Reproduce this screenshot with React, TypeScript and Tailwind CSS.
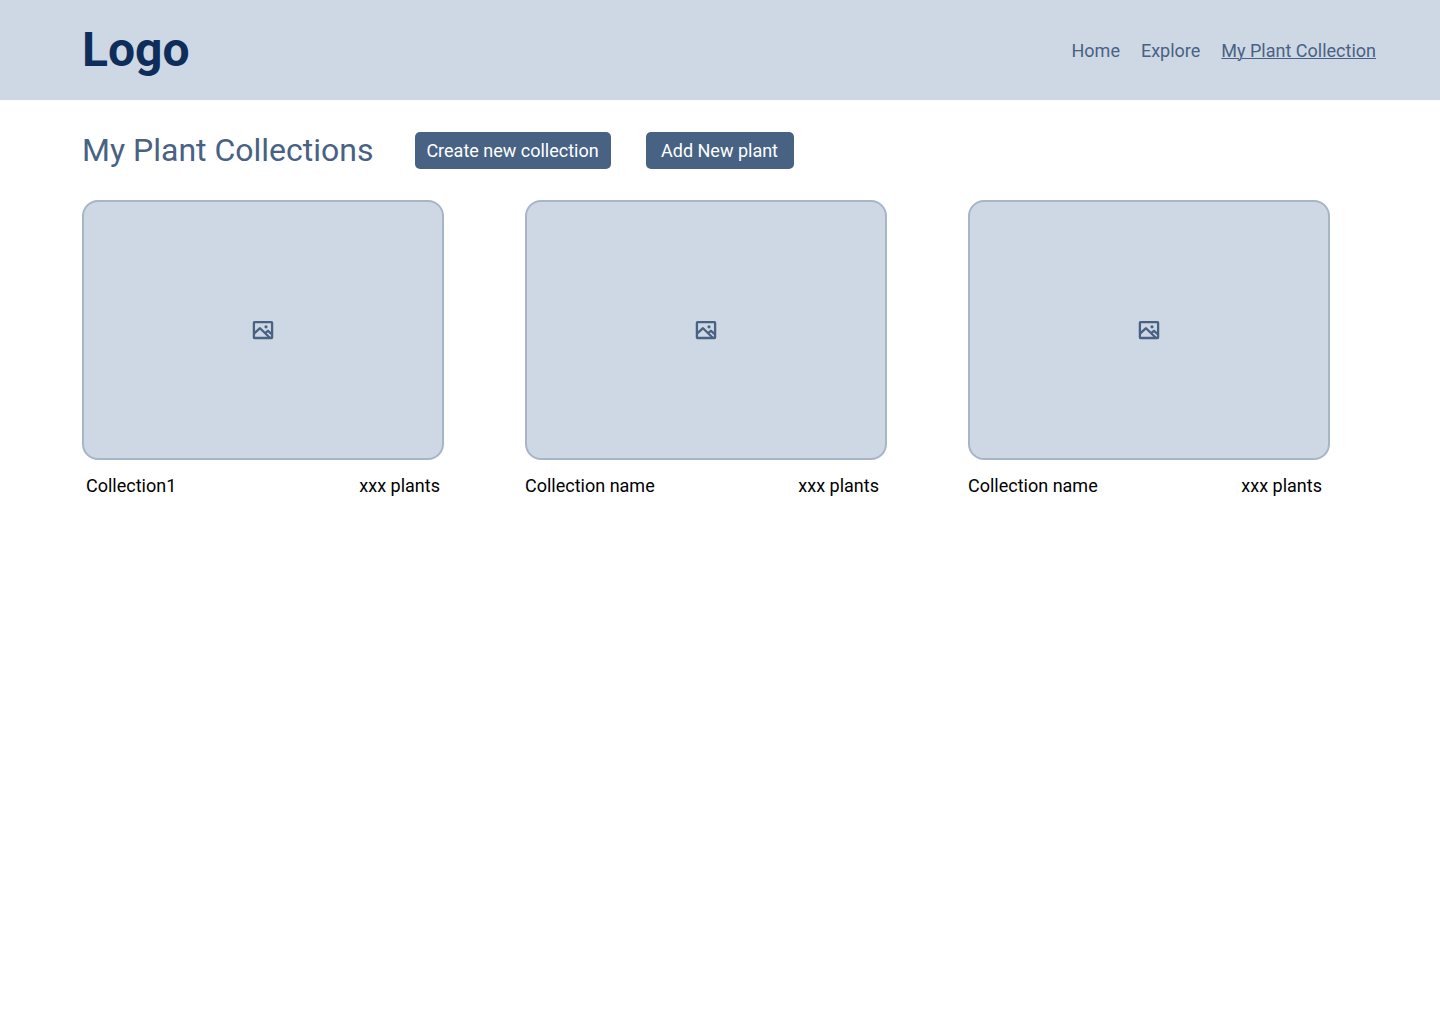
const navLinks = [
  { label: "Home", current: false },
  { label: "Explore", current: false },
  { label: "My Plant Collection", current: true },
];

const collections = [
  { name: "Collection1", count: "xxx plants", inset: "px-1" },
  { name: "Collection name", count: "xxx plants", inset: "pr-2" },
  { name: "Collection name", count: "xxx plants", inset: "pr-2" },
];

function ImageIcon() {
  return (
    <svg
      width="24"
      height="24"
      viewBox="0 0 24 24"
      fill="none"
      stroke="#486284"
      strokeWidth="2.3"
      strokeLinejoin="round"
      aria-hidden="true"
    >
      <rect x="2.9" y="4.2" width="18.2" height="15.8" rx="0.6" />
      <path d="M3 15.6L9 10.2L18.8 19.8M14 15.2L17 12.8L21 16.4" />
      <circle cx="15" cy="8.8" r="1.6" fill="#486284" stroke="none" />
    </svg>
  );
}

export default function App() {
  return (
    <div className="min-h-screen bg-white font-[Roboto,sans-serif] text-lg text-black">
      <header className="flex h-[100px] items-center justify-between bg-[#ced8e4] pr-16 pl-[82px]">
        <a href="#" className="text-5xl font-bold text-[#0f2d5b]">
          Logo
        </a>
        <nav className="flex gap-[21px] pt-0.5 text-[#486284]">
          {navLinks.map((link) => (
            <a
              key={link.label}
              href="#"
              aria-current={link.current ? "page" : undefined}
              className={link.current ? "underline decoration-1" : ""}
            >
              {link.label}
            </a>
          ))}
        </nav>
      </header>
      <main className="pr-[110px] pl-[82px]">
        <div className="flex h-[100px] items-center">
          <h1 className="pt-0.5 text-[32px] text-[#486284]">My Plant Collections</h1>
          <button className="ml-[41px] h-[37px] w-[196px] rounded-[5px] bg-[#486284] pt-0.5 text-white">
            Create new collection
          </button>
          <button className="ml-[35px] h-[37px] w-[148px] rounded-[5px] bg-[#486284] pt-0.5 text-white">
            Add New plant
          </button>
        </div>
        <div className="grid grid-cols-3 gap-[81px]">
          {collections.map((c, i) => (
            <article key={i}>
              <div className="flex h-[260px] items-center justify-center rounded-2xl border-2 border-[#a7b5c5] bg-[#ced8e4]">
                <ImageIcon />
              </div>
              <div className={`mt-3 flex justify-between ${c.inset}`}>
                <h2>{c.name}</h2>
                <span>{c.count}</span>
              </div>
            </article>
          ))}
        </div>
      </main>
    </div>
  );
}
